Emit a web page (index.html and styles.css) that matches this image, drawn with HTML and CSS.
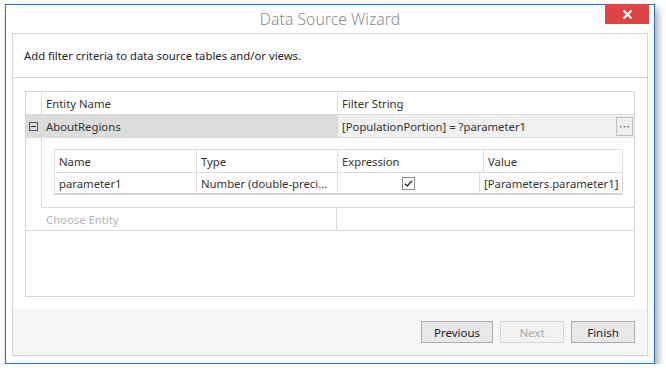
FILE: index.html
```html
<!DOCTYPE html>
<html>
<head>
<meta charset="utf-8">
<link rel="stylesheet" href="styles.css">
</head>
<body>
<div class="window">
  <div class="titlebar">
    <span class="title">Data Source Wizard</span>
    <div class="close">
      <svg width="11" height="11" viewBox="0 0 11 11"><path d="M1.5 1.5 L9.5 9.5 M9.5 1.5 L1.5 9.5" stroke="#fff" stroke-width="2.2"/></svg>
    </div>
  </div>
  <div class="panel">
    <div class="panel-head">Add filter criteria to data source tables and/or views.</div>
    <div class="panel-body">
      <div class="grid">
        <div class="row head">
          <div class="ind"></div>
          <div class="cell c-name">Entity Name</div>
          <div class="cell c-filter">Filter String</div>
        </div>
        <div class="row sel">
          <div class="ind">
            <svg width="9" height="9" viewBox="0 0 9 9"><rect x="0.5" y="0.5" width="8" height="8" fill="none" stroke="#555"/><path d="M2 4.5 H7" stroke="#333"/></svg>
          </div>
          <div class="cell c-name">AboutRegions</div>
          <div class="cell c-filter filter-val">
            <span>[PopulationPortion] = ?parameter1</span>
            <span class="dots">
              <svg width="11" height="3" viewBox="0 0 11 3"><rect x="1" y="1" width="1.4" height="1.4" fill="#666"/><rect x="4.8" y="1" width="1.4" height="1.4" fill="#666"/><rect x="8.6" y="1" width="1.4" height="1.4" fill="#666"/></svg>
            </span>
          </div>
        </div>
        <div class="detail">
          <div class="ind-spacer"></div>
          <div class="detail-body">
            <div class="sub">
              <div class="srow shead">
                <div class="scell s1">Name</div>
                <div class="scell s2">Type</div>
                <div class="scell s3">Expression</div>
                <div class="scell s4">Value</div>
              </div>
              <div class="srow">
                <div class="scell s1">parameter1</div>
                <div class="scell s2">Number (double-preci...</div>
                <div class="scell s3 center">
                  <svg width="13" height="13" viewBox="0 0 13 13"><rect x="0.5" y="0.5" width="12" height="12" fill="#fff" stroke="#8a8a8a"/><path d="M3 6.8 L5.3 9 L10 3.8" fill="none" stroke="#333" stroke-width="1.5"/></svg>
                </div>
                <div class="scell s4">[Parameters.parameter1]</div>
              </div>
            </div>
          </div>
        </div>
        <div class="row choose">
          <div class="cell c-name2">Choose Entity</div>
          <div class="cell c-filter"></div>
        </div>
      </div>
    </div>
    <div class="footer">
      <button class="btn">Previous</button>
      <button class="btn disabled">Next</button>
      <button class="btn">Finish</button>
    </div>
  </div>
</div>
</body>
</html>
```
FILE: styles.css
```css
html, body { margin: 0; padding: 0; background: #fff; }
body { font-family: "Noto Sans", "Open Sans", sans-serif; font-size: 11.3px; color: #333; }
.window {
  position: relative;
  margin: 4px 0 0 5px;
  width: 648px;
  height: 358px;
  border: 1px solid #1c73cc;
  background: #fff;
  box-shadow: 3px 4px 7px rgba(0,0,0,0.35);
  display: flex;
  flex-direction: column;
}
.titlebar {
  height: 28px;
  display: flex;
  align-items: center;
  justify-content: center;
  flex: none;
}
.title { font-size: 15.8px; color: #8c8c8c; font-weight: 300; margin-top: -1px; }
.close {
  position: absolute;
  top: -1px;
  right: 5px;
  width: 44px;
  height: 20px;
  background: #e04343;
  display: flex;
  align-items: center;
  justify-content: center;
}
.panel {
  margin: 0 6px 7px 6px;
  flex: 1;
  border: 1px solid #d4d4d4;
  display: flex;
  flex-direction: column;
}
.panel-head {
  height: 43px;
  border-bottom: 1px solid #d4d4d4;
  display: flex;
  align-items: center;
  padding-left: 11px;
  color: #222;
  flex: none;
}
.panel-body {
  padding: 13px 12px 12px 12px;
  flex: none;
}
.grid {
  height: 204px;
  border: 1px solid #d6d6d6;
  display: flex;
  flex-direction: column;
}
.row { display: flex; height: 22px; border-bottom: 1px solid #dcdcdc; flex: none; }
.ind { width: 15px; border-right: 1px solid #dcdcdc; display: flex; align-items: center; justify-content: center; flex: none; }
.cell { display: flex; align-items: center; padding-left: 4px; white-space: nowrap; overflow: hidden; }
.c-name { width: 291px; border-right: 1px solid #dcdcdc; }
.c-filter { flex: 1; }
.row.sel .ind, .row.sel .c-name { background: #dcdcdc; }
.filter-val { background: #f0f0f0; justify-content: space-between; padding-right: 1px; }
.dots {
  width: 15px; height: 17px; border: 1px solid #bdbdbd; background: #efefef;
  display: flex; align-items: center; justify-content: center;
}
.detail { display: flex; height: 70px; flex: none; }
.ind-spacer { width: 15px; border-right: 1px solid #dcdcdc; flex: none; }
.detail-body { flex: 1; border-bottom: 1px solid #dcdcdc; padding: 11px 11px 0 12px; }
.sub { border: 1px solid #dcdcdc; border-bottom: 2px solid #d2d2d2; }
.srow { display: flex; height: 20px; }
.srow.shead { border-bottom: 1px solid #dcdcdc; height: 22px; }
.scell { display: flex; align-items: center; padding-left: 4px; border-right: 1px solid #dcdcdc; white-space: nowrap; overflow: hidden; }
.scell.s1 { width: 137px; }
.scell.s2 { width: 136px; }
.scell.s3 { width: 141px; }
.scell.s4 { flex: 1; border-right: none; }
.center { justify-content: center; padding-left: 0; }
.c-name2 { width: 311px; border-right: 1px solid #dcdcdc; color: #b4b4b4; padding-left: 20px; box-sizing: border-box; }
.footer {
  flex: 1;
  background: #f6f6f6;
  display: flex;
  justify-content: flex-end;
  align-items: center;
  gap: 7px;
  padding: 0 12px 0 0;
}
.btn {
  font-family: inherit;
  font-size: 11.5px;
  height: 22px;
  border: 1px solid #acacac;
  background: #e8e8e8;
  color: #222;
  padding: 0;
  margin: 0;
}
.btn:nth-child(1) { width: 72px; }
.btn:nth-child(2) { width: 64px; }
.btn:nth-child(3) { width: 64px; }
.btn.disabled { color: #a8a8a8; border-color: #d6d6d6; background: #f2f2f2; }
```
